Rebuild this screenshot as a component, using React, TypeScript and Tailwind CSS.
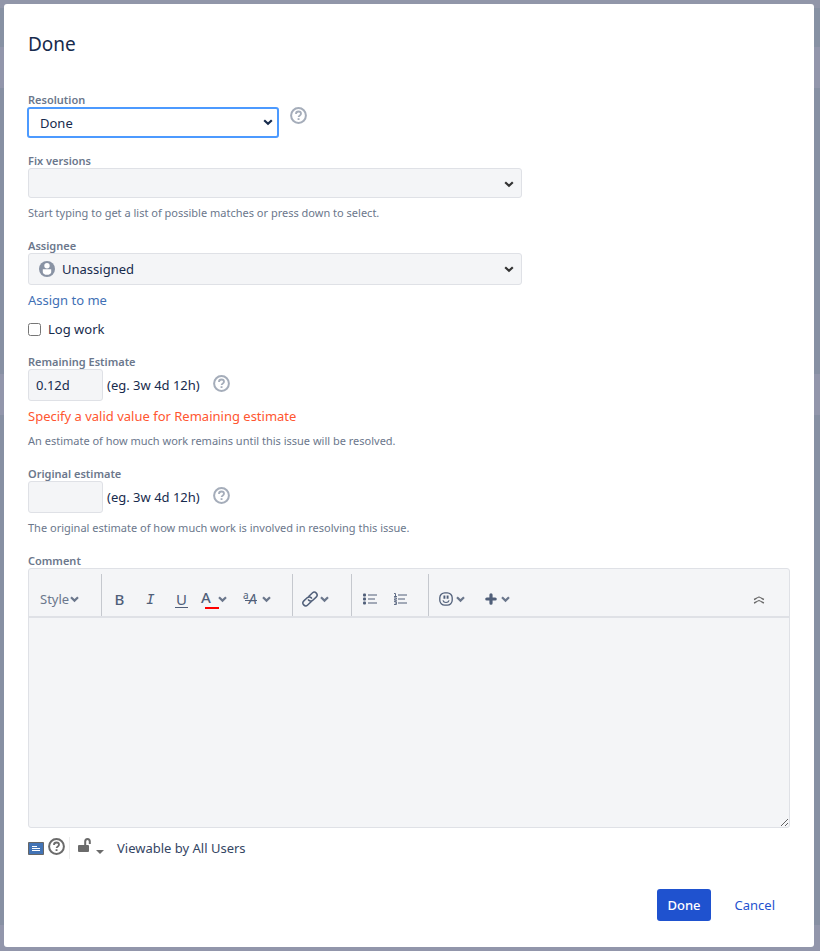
import type { ReactNode } from 'react';

const fieldBox = 'rounded-[3px] border border-[#dfe1e6] bg-[#f4f5f7] text-[13px] leading-5 text-[#172b4d] outline-none';

function Chevron({ className = '' }: { className?: string }) {
  return (
    <svg className={className} width="10" height="7" viewBox="0 0 10 7" fill="none" stroke="currentColor" strokeWidth="2.2" aria-hidden="true">
      <path d="M1.2 1.2 5 4.8l3.8-3.6" />
    </svg>
  );
}

function SmallChevron() {
  return (
    <svg width="9" height="7" viewBox="0 0 9 7" fill="none" stroke="#6b778c" strokeWidth="2.2" aria-hidden="true">
      <path d="M1 1.2 4.5 4.6 8 1.2" />
    </svg>
  );
}

function HelpIcon() {
  return (
    <svg width="17" height="17" viewBox="0 0 17 17" fill="none" stroke="currentColor" aria-hidden="true">
      <circle cx="8.5" cy="8.5" r="7.4" strokeWidth="2" />
      <path d="M6 6.9c0-1.5 1.1-2.4 2.5-2.4s2.5.9 2.5 2.2c0 1.8-2.4 1.7-2.4 3.4" strokeWidth="1.8" />
      <path d="M7.6 11.2h1.9v1.8H7.6z" fill="currentColor" stroke="none" />
    </svg>
  );
}

function HelpLink({ label }: { label: string }) {
  return (
    <a href="#help" aria-label={label} className="mb-[3px] text-[#a5adba]">
      <HelpIcon />
    </a>
  );
}

function Label({ htmlFor, children }: { htmlFor: string; children: ReactNode }) {
  return (
    <label htmlFor={htmlFor} className="block text-[11px] leading-[14px] font-semibold text-[#6b778c]">
      {children}
    </label>
  );
}

function Hint({ children }: { children: ReactNode }) {
  return <p className="mt-[7px] pb-[2px] text-[11px] leading-4 text-[#6b778c]">{children}</p>;
}

function EstimateField({ id, label, value }: { id: string; label: string; value: string }) {
  return (
    <>
      <Label htmlFor={id}>{label}</Label>
      <div className="flex items-center">
        <input id={id} type="text" defaultValue={value} className={`${fieldBox} h-8 w-[75px] px-[7px]`} />
        <span className="mr-[13px] ml-1">(eg. 3w 4d 12h)</span>
        <HelpLink label={`Help for ${label}`} />
      </div>
    </>
  );
}

function ToolGroup({ className, children }: { className: string; children: ReactNode }) {
  return <div className={`flex h-[42px] items-center border-l border-[#c5c8ce] pt-2 ${className}`}>{children}</div>;
}

function Toolbar() {
  return (
    <div className="flex border-b-2 border-[#dfe1e6] pt-[5px] text-[#505f79]">
      <div className="flex h-[42px] w-[72px] items-center pt-2 pl-[11px]">
        <button type="button" className="flex items-center gap-px text-[#6b778c]">
          Style
          <SmallChevron />
        </button>
      </div>
      <ToolGroup className="pr-[21px] pl-[2px]">
        <button type="button" aria-label="Bold" className="w-[31px] text-[15px] font-medium">B</button>
        <button type="button" aria-label="Italic" className="w-[31px] font-['DejaVu_Sans_Mono',monospace] text-[14px] italic">I</button>
        <button type="button" aria-label="Underline" className="flex w-[31px] justify-center">
          <span className="w-[13px] border-b border-current text-[15px] leading-4">U</span>
        </button>
        <button type="button" aria-label="Text colour" className="ml-1 flex w-[26px] items-center justify-between">
          <span className="relative pb-1 text-[15px] leading-4 font-medium">
            A
            <span className="absolute bottom-0 left-1 h-[2px] w-[14px] bg-[#f00]" />
          </span>
          <SmallChevron />
        </button>
        <button type="button" aria-label="More formatting" className="ml-4 flex w-[28px] items-center justify-between">
          <span className="flex items-start bg-[linear-gradient(currentColor,currentColor)] bg-[length:14px_1px] bg-[position:2px_10px] bg-no-repeat leading-4">
            <span className="text-[10px] leading-[10px]">a</span>
            <span className="text-[14px] leading-[18px] italic">A</span>
          </span>
          <SmallChevron />
        </button>
      </ToolGroup>
      <ToolGroup className="pr-[22px] pl-[9px]">
        <button type="button" aria-label="Link" className="flex w-[27px] items-center justify-between">
          <svg width="16" height="16" viewBox="0 0 16 16" fill="none" stroke="currentColor" strokeWidth="1.5" aria-hidden="true">
            <g transform="rotate(-43 8 8)">
              <path d="M7.6 10.8H2.2a2.8 2.8 0 0 1 0-5.6h4.9a2.8 2.8 0 0 1 2.5 3.8" />
              <path d="M8.4 5.2h5.4a2.8 2.8 0 0 1 0 5.6H8.9A2.8 2.8 0 0 1 6.4 7" />
            </g>
          </svg>
          <SmallChevron />
        </button>
      </ToolGroup>
      <ToolGroup className="pr-3 pl-[2px]">
        <button type="button" aria-label="Bullet list" className="flex w-[31px] justify-center">
          <svg width="14" height="12" viewBox="0 0 14 12" fill="currentColor" aria-hidden="true">
            <rect y=".5" width="3" height="3" rx="1" />
            <rect y="4.5" width="3" height="3" rx="1" />
            <rect y="8.5" width="3" height="3" rx="1" />
            <path d="M5 1.5h9v1H5zM5 5.5h7v1H5zM5 9.5h9v1H5z" />
          </svg>
        </button>
        <button type="button" aria-label="Numbered list" className="flex w-[31px] justify-center">
          <svg width="13" height="12" viewBox="0 0 13 12" fill="none" stroke="currentColor" aria-hidden="true">
            <path d="M4 2h9M4 6h7M4 10h9" />
            <path d="M0 .5h1.5v3M0 3.5h3M0 4.9h2.4v1.2H.6v1.2H3M0 8.6h2.4v2.9H0M.8 10h1.6" strokeWidth=".9" />
          </svg>
        </button>
      </ToolGroup>
      <ToolGroup className="gap-5 pl-[10px]">
        <button type="button" aria-label="Emoji" className="flex w-[26px] items-center justify-between">
          <svg width="14" height="14" viewBox="0 0 14 14" fill="none" stroke="currentColor" aria-hidden="true">
            <rect x=".8" y=".8" width="12.4" height="12.4" rx="5" strokeWidth="1.3" />
            <path d="M5.4 3.6v3.2M8.6 3.6v3.2" strokeWidth="1.9" />
            <path d="M3.9 8.4c.5 1.5 1.7 2.1 3.1 2.1s2.6-.6 3.1-2.1" strokeWidth="1.2" />
          </svg>
          <SmallChevron />
        </button>
        <button type="button" aria-label="Insert" className="flex w-[25px] items-center justify-between">
          <svg width="12" height="12" viewBox="0 0 12 12" stroke="currentColor" strokeWidth="3.2" strokeLinecap="round" aria-hidden="true">
            <path d="M6 1.8v8.4M1.8 6h8.4" />
          </svg>
          <SmallChevron />
        </button>
      </ToolGroup>
      <button type="button" aria-label="Collapse toolbar" className="mr-6 ml-auto flex items-center pt-[10px] text-[#6b6b6b]">
        <svg width="12" height="8" viewBox="0 0 12 8" fill="none" stroke="currentColor" strokeWidth="1.3" aria-hidden="true">
          <path d="M1 3.5c1.2-.3 2.5-1.6 5-2.5 2.5.9 3.8 2.2 5 2.5M1 7c1.2-.3 2.5-1.6 5-2.5 2.5.9 3.8 2.2 5 2.5" />
        </svg>
      </button>
    </div>
  );
}

export default function App() {
  return (
    <div className="min-h-screen bg-[linear-gradient(#9196a9_8px,#8791a3_8px_47px,#9296ab_47px_88px,#8790a3_88px_374px,#9296ab_374px_415px,#8790a3_415px_925px,#9296ab_925px)] pt-1 pr-[6px] pb-1 pl-1 font-['Noto_Sans','Open_Sans',sans-serif] text-[13px] leading-5 text-[#172b4d]">
      <form role="dialog" aria-labelledby="dialog-title" className="rounded-[3px] bg-white px-6 pt-[26px] pb-[26px]" onSubmit={(e) => e.preventDefault()}>
        <h2 id="dialog-title" className="text-[19px] leading-7">Done</h2>

        <div className="mt-[35px] flex flex-col gap-4">
          <div>
            <Label htmlFor="resolution">Resolution</Label>
            <div className="flex items-start">
              <div className="relative mr-[11px] -ml-px w-[252px]">
                <select id="resolution" className="block h-[31px] w-full appearance-none rounded-[3px] border-2 border-[#4c9aff] bg-white px-[11px] pt-px outline-none">
                  <option>Done</option>
                </select>
                <Chevron className="pointer-events-none absolute top-3 right-[6px]" />
              </div>
              <HelpLink label="Help for Resolution" />
            </div>
          </div>

          <div>
            <Label htmlFor="fix-versions">Fix versions</Label>
            <div className="relative max-w-[494px]">
              <input id="fix-versions" type="text" role="combobox" aria-expanded="false" className={`${fieldBox} block h-[30px] w-full px-2`} />
              <Chevron className="pointer-events-none absolute top-[13px] right-2 text-[#333]" />
            </div>
            <Hint>Start typing to get a list of possible matches or press down to select.</Hint>
          </div>

          <div>
            <Label htmlFor="assignee">Assignee</Label>
            <div className="relative max-w-[494px]">
              <input id="assignee" type="text" role="combobox" aria-expanded="false" defaultValue="Unassigned" className={`${fieldBox} block h-8 w-full pr-6 pl-[33px]`} />
              <svg className="pointer-events-none absolute top-2 left-[11px]" width="16" height="16" viewBox="0 0 16 16" aria-hidden="true">
                <circle cx="8" cy="8" r="8" fill="#8993a4" />
                <circle cx="8" cy="4.7" r="2.7" fill="#fff" />
                <path d="M3.8 8.3h8.4v2.9c0 1.5-1.9 2.6-4.2 2.6s-4.2-1.1-4.2-2.6z" fill="#fff" />
              </svg>
              <Chevron className="pointer-events-none absolute top-[13px] right-2 text-[#333]" />
            </div>
            <div className="mt-[5px] flex">
              <a href="#assign" className="text-[#3f70b5]">Assign to me</a>
            </div>
            <div className="mt-[9px] flex items-center">
              <input id="log-work" type="checkbox" className="h-[13px] w-[13px]" />
              <label htmlFor="log-work" className="pl-[7px]">Log work</label>
            </div>
          </div>

          <div>
            <EstimateField id="remaining" label="Remaining Estimate" value="0.12d" />
            <p className="mt-[5px] text-[#ff5630]">Specify a valid value for Remaining estimate</p>
            <Hint>An estimate of how much work remains until this issue will be resolved.</Hint>
          </div>

          <div>
            <EstimateField id="original" label="Original estimate" value="" />
            <Hint>The original estimate of how much work is involved in resolving this issue.</Hint>
          </div>

          <div>
            <Label htmlFor="comment">Comment</Label>
            <div className="rounded-[3px] border border-[#dfe1e6] bg-[#f4f5f7]">
              <Toolbar />
              <textarea id="comment" className="block h-[209px] w-full resize-y p-2 outline-none" />
            </div>
            <div className="mt-2 flex h-6 items-center text-[#6b6b6b]">
              <button type="button" aria-label="Preview">
                <svg width="16" height="13" viewBox="0 0 16 13" aria-hidden="true">
                  <path d="M.5.5h15v12H.5z" fill="#4273b5" stroke="#666" />
                  <path d="M4 4.5h5M4 6.5h8M4 8.5h8" stroke="#fff" />
                </svg>
              </button>
              <a href="#notation" aria-label="Formatting help" className="mb-1 ml-1">
                <HelpIcon />
              </a>
              <span className="ml-1 h-[22px] w-px bg-[#eee]" />
              <button type="button" className="ml-2 flex items-center text-[#344563]">
                <svg className="mr-[13px] mb-1" width="26" height="18" viewBox="0 0 26 18" fill="#6b6b6b" aria-hidden="true">
                  <rect x="0" y="8" width="11" height="7" rx="1" />
                  <path d="M7.2 8V4.500c0-1.600.9-2.600 2.300-2.600s2.300 1 2.300 2.600V7" fill="none" stroke="#6b6b6b" strokeWidth="2" />
                  <path d="M18 13h8l-4 4z" />
                </svg>
                Viewable by All Users
              </button>
            </div>
          </div>
        </div>

        <div className="mt-[29px] flex justify-end pr-[5px]">
          <button type="submit" className="h-8 rounded-[3px] bg-[#1f52cf] px-[10px] font-medium text-white">Done</button>
          <button type="button" className="ml-[14px] h-8 px-[10px] text-[#1f52cf]">Cancel</button>
        </div>
      </form>
    </div>
  );
}
